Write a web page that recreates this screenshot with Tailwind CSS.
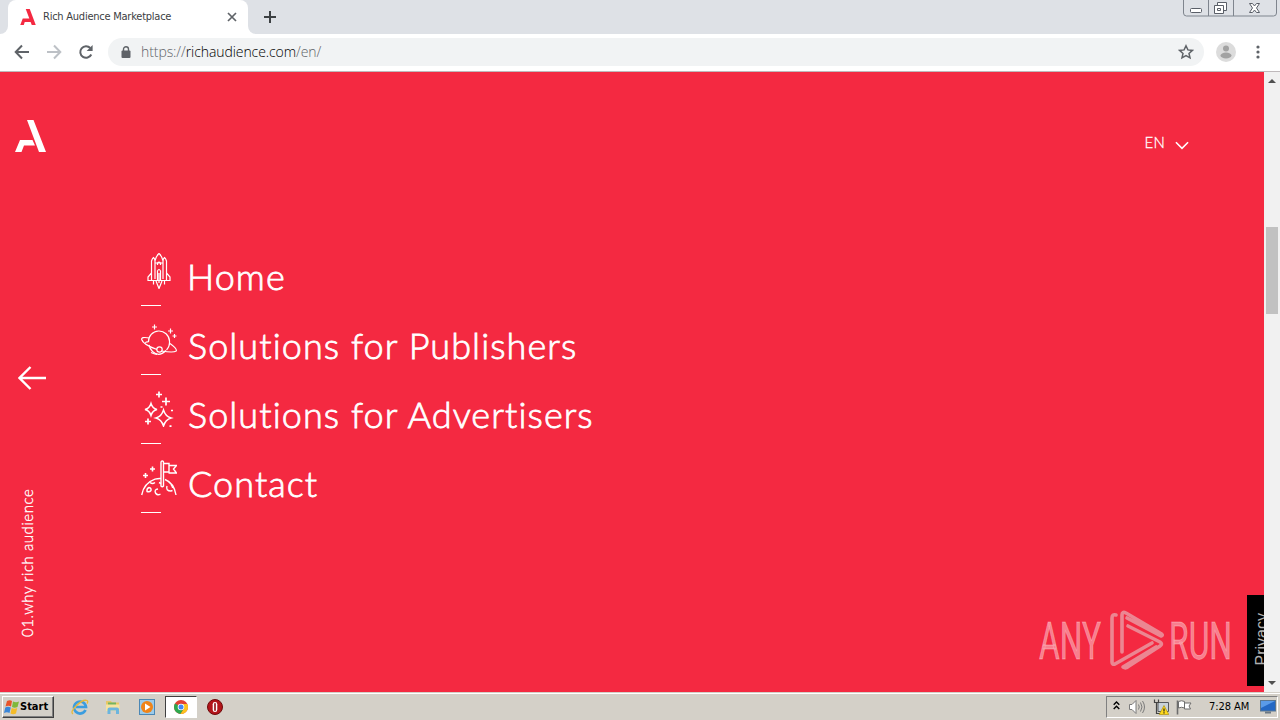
<!DOCTYPE html>
<html lang="en">
<head>
  <meta charset="UTF-8">
  <meta name="viewport" content="width=device-width, initial-scale=1.0">
  <title>Rich Audience Marketplace</title>
  <script src="https://cdn.jsdelivr.net/npm/@tailwindcss/browser@4"></script>
</head>
<body class="flex h-screen w-screen flex-col overflow-hidden bg-white">

  <!-- tab strip -->
  <div class="flex h-[34px] shrink-0 items-start justify-between bg-[#dee1e6]">
    <div class="flex h-full">
      <div class="flex w-2 items-end bg-white"><div class="h-full w-full rounded-br-lg bg-[#dee1e6]"></div></div>
      <div class="flex w-[240px] items-center rounded-t-lg bg-white pl-3 pr-[11px]">
        <svg class="h-4 w-4" viewBox="0 0 31 32" fill="#f42941"><path d="M11 0h8l12 32h-8zM5 19h14l2 7H9l-2 6H0z"/></svg>
        <span class="ml-[7px] mt-px whitespace-nowrap font-['DejaVu_Sans_Condensed','DejaVu_Sans',sans-serif] text-[11px] tracking-[-0.24px] text-[#3c4043] [font-stretch:condensed]">Rich Audience Marketplace</span>
        <svg class="ml-auto h-[10px] w-[10px]" viewBox="0 0 10 10" stroke="#5f6368" stroke-width="1.700"><path d="M1 1l8 8M9 1L1 9"/></svg>
      </div>
      <div class="w-2 bg-white"><div class="h-full w-full rounded-bl-lg bg-[#dee1e6]"></div></div>
      <svg class="ml-2 mt-[11px] h-3 w-3" viewBox="0 0 12 12" stroke="#3c4043" stroke-width="2"><path d="M6 0v12M0 6h12"/></svg>
    </div>
    <!-- window buttons -->
    <svg class="mr-[3px] h-[18px] w-[94px]" viewBox="0 0 94 18" fill="none" stroke="#7f858e">
      <path d="M.5 0v13q0 3 3 3h87q3 0 3-3V0M25.500 0v16M50.500 0v16"/>
      <rect x="7.500" y="8.500" width="11" height="4" rx="1" fill="#fff" stroke="#5a5f68"/>
      <path d="M34.500 2.500h9v8h-9z" fill="#fff" stroke="#5a5f68"/>
      <path d="M31.500 5.500h9v8h-9z" fill="#fff" stroke="#5a5f68"/>
      <path d="M34.500 8.500h3v2h-3z" stroke="#5a5f68"/>
      <path d="M66.500 3.500h3l2 2.500 2-2.500h3L73.500 8l3 4.500h-3l-2-2.500-2 2.500h-3L69.500 8z" fill="#fff" stroke="#5a5f68"/>
    </svg>
  </div>

  <!-- toolbar -->
  <div class="flex h-[38px] shrink-0 items-center border-b border-[#bfb9bb] bg-white pb-px pl-[14px] pr-[14px]">
    <svg class="h-4 w-4" viewBox="0 0 16 16" fill="none" stroke="#5f6368" stroke-width="2"><path d="M15 8H2M8 1.500L1.700 8 8 14.500"/></svg>
    <svg class="ml-4 h-4 w-4" viewBox="0 0 16 16" fill="none" stroke="#bdc1c6" stroke-width="2"><path d="M1 8h13M8 1.500L14.300 8 8 14.500"/></svg>
    <svg class="ml-4 h-4 w-4" viewBox="0 0 16 16" fill="none" stroke="#5f6368" stroke-width="2"><path d="M13.300 10.500A5.800 5.800 0 1 1 12.300 4"/><path d="M14.600 1v6h-6z" fill="#5f6368" stroke="none"/></svg>
    <div class="ml-[14px] flex h-7 flex-1 items-center rounded-full bg-[#f1f3f4] pl-[13px] pr-[10px]">
      <svg class="h-3 w-[10px]" viewBox="0 0 10 12"><path d="M2.500 5V3.200a2.500 2.500 0 0 1 5 0V5" fill="none" stroke="#5f6368" stroke-width="1.400"/><rect x="0.500" y="4.500" width="9" height="7.500" rx="1" fill="#5f6368"/></svg>
      <span class="ml-[10px] whitespace-nowrap font-['Open_Sans','Noto_Sans',sans-serif] text-sm font-light tracking-[-0.08px] text-[#5f6368]">https://<span class="text-black">richaudience.com</span>/en/</span>
      <svg class="ml-auto h-4 w-4" viewBox="0 0 16 16" fill="none" stroke="#5f6368" stroke-width="1.500"><path d="M8 1.800l1.900 4.100 4.500.5-3.400 3 1 4.400L8 11.500l-4 2.300 1-4.400-3.400-3 4.500-.5z"/></svg>
    </div>
    <svg class="ml-3 h-5 w-5" viewBox="0 0 20 20"><circle cx="10" cy="10" r="10" fill="#dcdcdc"/><circle cx="10" cy="6.500" r="3" fill="#a2a2a2"/><ellipse cx="10" cy="13.500" rx="5.500" ry="3" fill="#a2a2a2"/></svg>
    <svg class="ml-[20px] h-4 w-1" viewBox="0 0 4 16" fill="#5f6368"><circle cx="2" cy="3" r="1.600"/><circle cx="2" cy="8" r="1.600"/><circle cx="2" cy="13" r="1.600"/></svg>
    <div class="w-[6px]"></div>
  </div>

  <!-- page -->
  <div class="flex h-[620px] shrink-0">
    <div class="relative flex flex-1 overflow-hidden bg-[#f42941] text-white">
      <aside class="flex w-[141px] flex-col items-start pt-12">
        <svg class="ml-[15px] h-8 w-[31px]" viewBox="0 0 31 32" fill="#fff"><path d="M12 0h6.500L31 32h-7zM5 20h12.500l2.500 5.500H9L6.500 32H0z"/></svg>
        <svg class="ml-[18px] mt-[214px] h-6 w-7" viewBox="0 0 28 24" fill="none" stroke="#fff" stroke-width="2.400"><path d="M28 12H2M12.500 1L1.500 12l11 11"/></svg>
        <div class="ml-[17px] mt-[99px] h-[148px] rotate-180 whitespace-nowrap font-[Lato,sans-serif] text-[15px] font-light leading-5 tracking-[0.55px] [-webkit-text-stroke:0.3px_white] [writing-mode:vertical-rl]">01.why rich audience</div>
      </aside>

      <main class="flex-1 pt-[178px]">
        <ul class="font-[Lato,sans-serif] text-4xl font-light tracking-[1.080px] [-webkit-text-stroke:0.8px_white]">
          <li class="flex h-[69px] flex-col">
            <div class="flex h-[55px] items-start">
              <svg class="mt-[3px] h-9 w-9" viewBox="0 0 36 36" fill="none" stroke="#fff" stroke-width="1.200">
                <path d="M14 26V8q1-5 4-7.500Q21 3 22 8v18M14 10h8M16.500 12v-1.500a1.500 1.500 0 0 1 3 0V12M10.500 16V8q1-3 2-3.500 1.500 1 1.500 4M25.500 16V8q-1-3-2-3.500-1.500 1-1.500 4M10.500 15v5L7 24v3.500h22V24l-3.500-4v-5M10.500 17v10M25.500 17v10M16.500 27v-9q1.500-3 3 0v9M15 28l3 7.500 3-7.500M18 20v10M12.500 28v3.500M23.500 28v3.500"/>
              </svg>
              <span class="ml-[10px] mt-[2px] leading-[48px]">Home</span>
            </div>
            <div class="h-px w-5 bg-white"></div>
          </li>
          <li class="flex h-[69px] flex-col">
            <div class="flex h-[55px] items-start">
              <svg class="mt-[4px] h-9 w-9" viewBox="0 0 36 36" fill="none" stroke="#fff" stroke-width="1.200">
                <path d="M7.500 19a10.500 10.500 0 0 1 21-1q.5 5-3 9M8 22q1 4 3.500 6.500 6.500 6 13.500-1"/>
                <path d="M8.500 15Q0 13.500.7 16.500 2 21.500 16 26.500M20.500 28q12 2 14.700 0 1.300-2-6.200-7.500M7.500 19q-3-.5-2.800 1"/>
                <circle cx="18.500" cy="26.500" r="2.700"/>
                <path d="M10 29.500q3 1.500 6 1.800M13.500 1.500v5M11 4h5M29.500 5.500v5M27 8h5M33.500 11v4M31.500 13h4"/>
              </svg>
              <span class="ml-[11px] mt-[2px] leading-[48px]">Solutions for Publishers</span>
            </div>
            <div class="h-px w-5 bg-white"></div>
          </li>
          <li class="flex h-[69px] flex-col">
            <div class="flex h-[55px] items-start">
              <svg class="mt-[3px] h-9 w-9" viewBox="0 0 36 36" fill="none" stroke="#fff" stroke-width="1.500">
                <path d="M10 12.500q1.500 5 6 6-4.500 1-6 6-1.500-5-6-6 4.500-1 6-6zM22.500 19q2 6.500 7.500 8-5.500 1.500-7.500 8-2-6.500-7.500-8 5.500-1.500 7.500-8z"/>
                <path d="M18 .5v6M15 3.500h6M25 6.500v8M21 10.500h8M7 27.500v6M4 30.500h6" stroke-width="1.700"/>
                <path d="M19.500 16h2M30 19.500h2M28.500 35.200h2" stroke-width="1.700"/>
              </svg>
              <span class="ml-[11px] mt-[2px] leading-[48px]">Solutions for Advertisers</span>
            </div>
            <div class="h-px w-5 bg-white"></div>
          </li>
          <li class="flex h-[69px] flex-col">
            <div class="flex h-[55px] items-start">
              <svg class="mt-[3px] h-9 w-9" viewBox="0 0 36 36" fill="none" stroke="#fff" stroke-width="1.400">
                <path d="M.7 35Q3 23 14 19.200q3-.9 6-.7M24 19.500q9 3.500 11 15.500"/>
                <path d="M20 26V2.500q0-1.500 1.300-1.500t1.200 1.500V26q-1.200 1.500-2.500 0zM22.500 3.500H28V12h-5.500M28 5.500h7.500L32.500 9l3 4h-8"/>
                <path d="M11.500 6.500v5M9 9h5M4.500 13v5M2 15.500h5" stroke-width="1.600"/>
                <path d="M6 31.500q-.5-3 2-4 2.500.5 2 3-1.500 2-4 1zM17 29q-4 .5-2.500 4 2 3 5 1M26 26q-1.500 5 4 5l1.500-.5M30 25q2 1 1.500 3M9 22.500q2.500 2 5 0M18 22.500l2 1"/>
              </svg>
              <span class="ml-[11px] mt-[2px] leading-[48px]">Contact</span>
            </div>
            <div class="h-px w-5 bg-white"></div>
          </li>
        </ul>
      </main>

      <div class="mt-[59px] flex h-6 items-center gap-[10px] self-start pr-[75px]">
        <span class="-mt-px font-[Lato,sans-serif] text-[15px] font-light tracking-[0.2px] [-webkit-text-stroke:0.3px_white]">EN</span>
        <svg class="mt-[5px] h-[9px] w-[14px]" viewBox="0 0 15 9" fill="none" stroke="#fff" stroke-width="1.700"><path d="M1 1l6.500 6.500L14 1"/></svg>
      </div>

      <!-- watermark -->
      <svg class="absolute left-[1036px] top-[536px] h-[66px] w-[200px] overflow-visible" viewBox="0 0 200 66" fill="#fff" fill-opacity=".42">
        <text x="3" y="51" font-family="Roboto, sans-serif" font-size="52" textLength="62" lengthAdjust="spacingAndGlyphs" stroke="#fff" stroke-opacity=".3" stroke-width=".8">ANY</text>
        <text x="133" y="51" font-family="Roboto, sans-serif" font-size="52" textLength="63" lengthAdjust="spacingAndGlyphs" stroke="#fff" stroke-opacity=".3" stroke-width=".8">RUN</text>
        <g fill="none" stroke="#e8a5ad" stroke-opacity=".75" stroke-width="3.600" stroke-linejoin="round" stroke-linecap="round">
          <path d="M80 7q-4-1-4 3v44q0 3 3 2l37-21"/>
          <path d="M86 44V7q0-4 4-2l34 20q4 2 1 3l-34-18"/>
          <path d="M92 18l32 16q3 2 0 4L93 58q-3 3-6 1l33-20"/>
        </g>
      </svg>

      <div class="absolute right-0 top-[523px] h-[91px] w-[17px] overflow-hidden bg-black">
        <span class="absolute left-[6px] top-[18px] rotate-180 whitespace-nowrap font-['Liberation_Sans',sans-serif] text-base leading-[18px] text-[#b0b0b0] [writing-mode:vertical-rl]">Privacy</span>
      </div>
    </div>

    <!-- scrollbar -->
    <div class="flex w-4 flex-col items-center bg-[#f1f1f1]">
      <svg class="mt-[7px] h-1 w-2" viewBox="0 0 8 4" fill="#505050"><path d="M0 4l4-4 4 4z"/></svg>
      <div class="mt-[144px] h-[87px] w-3 bg-[#c1c1c1]"></div>
      <svg class="mb-[7px] mt-auto h-1 w-2" viewBox="0 0 8 4" fill="#505050"><path d="M0 0l4 4 4-4z"/></svg>
    </div>
  </div>

  <!-- taskbar -->
  <div class="flex h-7 shrink-0 items-center border-t border-[#d4d0c8] bg-[#d4d0c8] shadow-[inset_0_1px_0_#fff]">
    <div class="ml-[2px] mt-px flex h-[22px] w-[52px] items-center border border-b-[#404040] border-l-white border-r-[#404040] border-t-white pl-[1px] shadow-[inset_-1px_-1px_0_#808080]">
      <svg class="h-4 w-4 shrink-0" viewBox="0 0 16 16"><path d="M3 2q3-1.500 5 0L7 7.500Q4.500 6 1.500 7.500z" fill="#e8542a"/><path d="M9 2.500q3 1.500 6 0L13.500 8q-3 1.500-5.500 0z" fill="#7fb83c"/><path d="M1.300 8.500q2.500-1.500 5.500 0L5.500 14Q3 12.500 0 14z" fill="#3a86d8"/><path d="M7.700 9q3 1.500 5.500 0L12 14.500q-3 1.500-5.500 0z" fill="#f5bc28"/></svg>
      <span class="mt-px font-['DejaVu_Sans_Condensed','DejaVu_Sans',sans-serif] text-[11px] font-bold [font-stretch:condensed]">Start</span>
    </div>
    <svg class="ml-[17px] mt-px h-4 w-[18px]" viewBox="0 0 18 16" fill="none"><path d="M14.500 11a6 6 0 1 1 .5-3H5" stroke="#3b9ddf" stroke-width="2.700"/><path d="M2 15Q-1 13 5 7q7-7 11-5.500 1.500 1 0 3" stroke="#e8b93a" stroke-width="1.300"/></svg>
    <svg class="ml-4 mt-px h-4 w-4" viewBox="0 0 16 16"><path d="M1 2h5l1 1.500h7V12H1z" fill="#e8c766"/><path d="M3 3.500h8v3H3z" fill="#74b45f"/><path d="M1 5.500h13.500V12H1z" fill="#f6e3a0"/><path d="M2.500 15v-4.500q0-2 2-2h7.500q2 0 2 2V15h-3v-3.500H5.500V15z" fill="#6cb5de"/></svg>
    <svg class="ml-[18px] mt-px h-4 w-4" viewBox="0 0 16 16"><rect x=".5" y=".5" width="15" height="15" fill="#9ccbea" stroke="#4b87b5"/><circle cx="8" cy="8" r="6" fill="#f08418"/><path d="M6 4.500v7l5.500-3.500z" fill="#fff"/></svg>
    <div class="ml-[10px] mt-px flex h-[22px] w-8 items-center justify-center border border-b-white border-l-[#404040] border-r-white border-t-[#404040] bg-white">
      <svg class="h-[14px] w-[14px]" viewBox="0 0 14 14"><circle cx="7" cy="7" r="7" fill="#e34133"/><path d="M1 3.500A7 7 0 0 0 6.500 14L10 8.500 7 7z" fill="#2da94f"/><path d="M7 4h6.300A7 7 0 0 1 6.500 14L10 8.500z" fill="#fcc31e"/><circle cx="7" cy="7" r="3.300" fill="#fff"/><circle cx="7" cy="7" r="2.500" fill="#4286f4"/></svg>
    </div>
    <svg class="ml-[10px] mt-px h-4 w-4" viewBox="0 0 16 16"><circle cx="8" cy="8" r="7.500" fill="#b3151a" stroke="#6e0a0c"/><rect x="5.700" y="3" width="4.600" height="10" rx="2.300" fill="#fff"/><rect x="7.200" y="4" width="1.600" height="8" rx=".8" fill="#8f0b10"/></svg>

    <!-- tray -->
    <div class="ml-auto mr-[2px] mt-px flex h-[22px] w-[172px] items-center border border-b-white border-l-[#808080] border-r-white border-t-[#808080]">
      <svg class="-mt-[3px] ml-[6px] h-[9px] w-[7px]" viewBox="0 0 7 9" fill="none" stroke="#000" stroke-width="1.400"><path d="M.7 3.800l2.800-2.800 2.800 2.800M.7 8l2.800-2.800L6.300 8"/></svg>
      <svg class="ml-[9px] h-4 w-4" viewBox="0 0 16 16" fill="#fff" stroke="#7b7b7b"><path d="M.5 5.500H3l4-4v13l-4-4H.5z"/><path d="M9.500 5.500q1.500 2.500 0 5M11.500 3.500q3 4.500 0 9M13.500 2q4 6 0 12" fill="none"/></svg>
      <svg class="ml-2 h-4 w-4" viewBox="0 0 16 16"><path d="M5 3.500h10.500v9H5z" fill="#c9d2da" stroke="#55595e"/><path d="M1.500.5v3h4v-3M3.500 3.500v11h4" fill="none" stroke="#444" stroke-width="1.200"/><path d="M11 6.500l4.800 9H6.200z" fill="#ffd91c" stroke="#a38600" stroke-width=".6"/><path d="M11 9.500v3M11 13.300v1.200" stroke="#222" stroke-width="1.200"/></svg>
      <svg class="ml-[7px] h-4 w-4" viewBox="0 0 16 16" fill="#fff" stroke="#6d6d6d"><path d="M1.500 1.500v14" stroke-width="1.600"/><path d="M2.500 2.500q3-1.500 6 0v6.500q-3-1.500-6 0zM8.500 4h6.500l-2 3 1.500 3H8.500z"/></svg>
      <span class="ml-[17px] mt-px whitespace-nowrap font-['DejaVu_Sans_Condensed','DejaVu_Sans',sans-serif] text-[11px] tracking-[-0.050px] [font-stretch:condensed]">7:28 AM</span>
      <svg class="ml-auto mr-px h-[14px] w-4" viewBox="0 0 16 14"><rect x=".5" y=".5" width="15" height="10.500" fill="#2468c4" stroke="#5a7690"/><path d="M1 1h14L1 8z" fill="#5a9be8"/><path d="M5 12.500h6" stroke="#6b7885" stroke-width="2"/></svg>
    </div>
  </div>
</body>
</html>
